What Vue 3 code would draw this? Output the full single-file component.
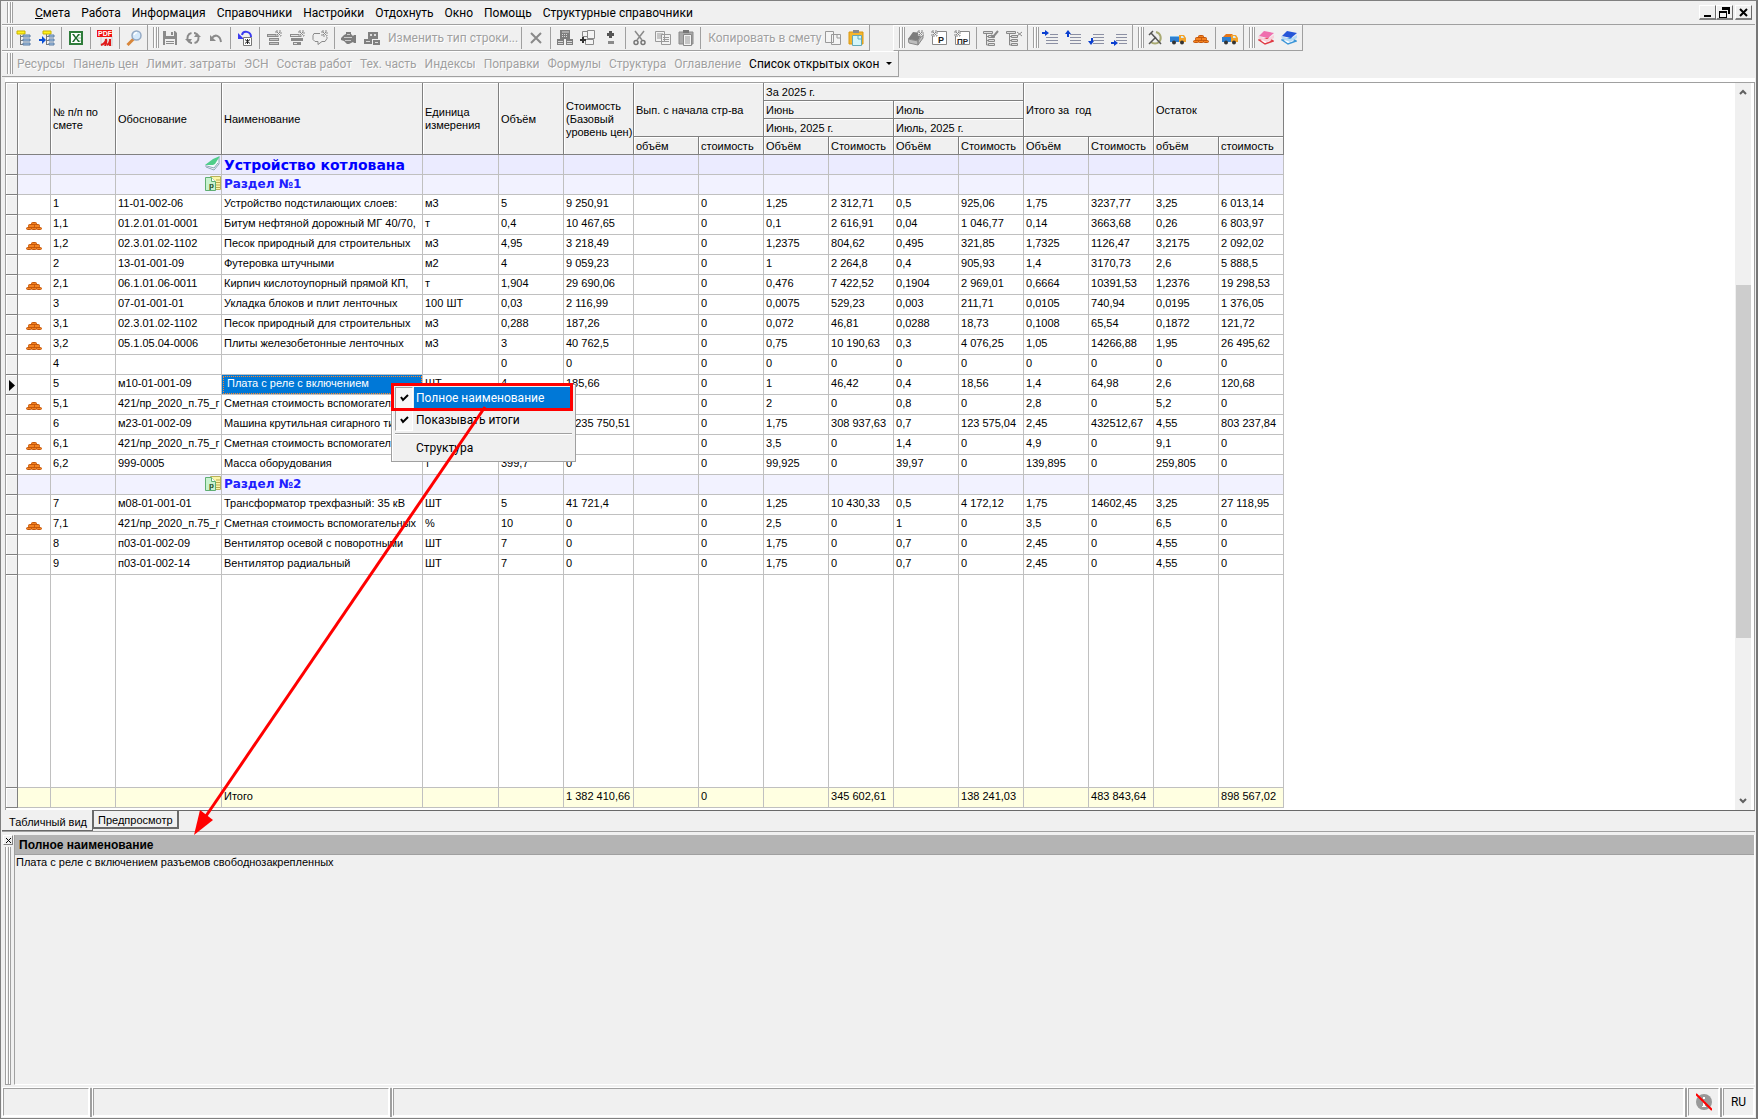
<template>
  <div class="window">
    <svg class="sprite" aria-hidden="true">
      <symbol id="i-tree" viewBox="0 0 16 16">
        <path d="M4.500 5v10M4.500 6.500h3M4.500 10.500h3M4.500 14.500h3" stroke="#777" fill="none" />
        <path d="M1 1h8v3H1z" fill="#fff21a" stroke="#c9b200" />
        <path d="M7 5h7v2H7zM7 9h7v2H7zM7 13h7v2H7z" fill="#a9c8ea" stroke="#5b7ca3" />
      </symbol>
      <symbol id="i-tree-in" viewBox="0 0 16 16">
        <path d="M7.500 4v11M8 6.500h2M8 10.500h2M8 14.500h2" stroke="#777" fill="none" />
        <path d="M4 1h8v3H4z" fill="#fff21a" stroke="#c9b200" />
        <path d="M10 5h5v2h-5zM10 9h5v2h-5zM10 13h5v2h-5z" fill="#a9c8ea" stroke="#5b7ca3" />
        <path d="M0 9h3V6l4 4-4 4v-3H0z" fill="#0a4fd6" />
      </symbol>
      <symbol id="i-excel" viewBox="0 0 16 16">
        <path d="M2 2h12v12H2z" fill="#fff" stroke="#2f7d3b" stroke-width="2" />
        <path d="M10 5h3M10 8h3M10 11h3" stroke="#8fc49a" />
        <path d="M4 4h2l2 3 2-3h2L9 8l3 4h-2L8 9l-2 3H4l3-4z" fill="#1d6b2b" />
      </symbol>
      <symbol id="i-pdf" viewBox="0 0 16 16">
        <path d="M4 6h11v10H4z" fill="#ececec" stroke="#ccc" />
        <path d="M0 0h15v7H0z" fill="#f01010" />
        <text x="1" y="6" font-size="7" font-weight="bold" fill="#fff" font-family="Liberation Sans">PDF</text>
        <path d="M4 15c3-1 5-3 5-6 1 3 0 5-1 7M10 15c2-1 3-3 3-6v7" stroke="#e01818" stroke-width="2" fill="none" />
      </symbol>
      <symbol id="i-lens" viewBox="0 0 16 16">
        <path d="M1.500 15l6-6" stroke="#d8863a" stroke-width="3" />
        <circle cx="10.500" cy="5.500" r="4.500" fill="#d5e9fb" stroke="#93a9c4" stroke-width="1.500" />
        <path d="M8 5q1-2.500 3-2.500" stroke="#fff" stroke-width="1.500" fill="none" />
      </symbol>
      <symbol id="i-save" viewBox="0 0 16 16">
        <path d="M1 1h12l2 2v12H1z" fill="#8a8a8a" />
        <path d="M4 1h8v5H4zM3 9h10v6H3z" fill="#efefef" />
        <path d="M9 2h2v3H9zM4 11h8v1H4zM4 13h8v1H4z" fill="#8a8a8a" />
      </symbol>
      <symbol id="i-refresh" viewBox="0 0 16 16">
        <path d="M3.500 11a5 5 0 0 1 3-8M12.500 5a5 5 0 0 1-3 8M9 3c2 0 3 1 3.500 3M7 13c-2 0-3-1-3.500-3" fill="none" stroke="#8a8a8a" stroke-width="2" />
        <path d="M0 9h7l-3 4zM9 7h7l-4-4z" fill="#8a8a8a" />
      </symbol>
      <symbol id="i-undo" viewBox="0 0 16 16">
        <path d="M4 8c3-4 8-3 9 4" fill="none" stroke="#8a8a8a" stroke-width="2" />
        <path d="M2 5v6h6z" fill="#8a8a8a" />
      </symbol>
      <symbol id="i-undo-page" viewBox="0 0 16 16">
        <path d="M5 5c1-5 9-4 9 2" fill="none" stroke="#3b3bf0" stroke-width="2" />
        <path d="M1 3v6h6z" fill="#3b3bf0" />
        <path d="M6.500 7.500h8v8h-8z" fill="#fff" stroke="#777" />
        <path d="M8 9.500l5 4M13 9.500l-5 4M10.500 9v5" stroke="#222" />
      </symbol>
      <symbol id="i-rows-new" viewBox="0 0 16 16">
        <path d="M1 4h11v3H1zM3 8h10v3H3zM3 12h10v3H3z" fill="#8a8a8a" />
        <path d="M2 5.500h8M4 9.500h8M4 13.500h8" stroke="#c4c4c4" />
        <use href="#i-star" />
      </symbol>
      <symbol id="i-rows-add" viewBox="0 0 16 16">
        <path d="M1 4h11v3H1zM2 8h12v3H2zM4 12h8v3H4z" fill="#8a8a8a" />
        <path d="M2 5.500h8M5 13.500h3" stroke="#e4e4e4" />
        <use href="#i-star" />
      </symbol>
      <symbol id="i-comment" viewBox="0 0 16 16">
        <path d="M8 3.500H2l-1 2v4l2 2h3v3l4-3h3l2-3V7" fill="none" stroke="#8a8a8a" />
        <use href="#i-star" />
      </symbol>
      <symbol id="i-star" viewBox="0 0 16 16">
        <path d="M10 1h5v5h-5z" fill="#eee" stroke="#8a8a8a" stroke-dasharray="2 1" />
        <path d="M11 2l3 3M14 2l-3 3" stroke="#8a8a8a" />
      </symbol>
      <symbol id="i-mixer" viewBox="0 0 16 16">
        <path d="M0 8l3-3 2-1V2h5v2l2 2 1-1h2v8h-2l-1-1-4 2H6l-3-3-3-1z" fill="#7d7d7d" />
        <path d="M3 7.500h8M4 10.500h6M6 4.500h3" stroke="#ccc" />
      </symbol>
      <symbol id="i-blocks" viewBox="0 0 16 16">
        <path d="M4 2h10v7H4zM0 9h8v5H0zM9 10h7v5H9z" fill="#808080" />
        <path d="M6 4h2v2H6zM10 4h2v2h-2zM2 11h4v1H2zM11 12h3v1h-3z" fill="#ddd" />
      </symbol>
      <symbol id="i-cross" viewBox="0 0 16 16">
        <path d="M3 3l10 10M13 3L3 13" stroke="#8a8a8a" stroke-width="2" />
      </symbol>
      <symbol id="i-calc" viewBox="0 0 16 16">
        <path d="M3 0h10v9H3zM0 9h7v6H0zM9 9h7v6H9z" fill="#7d7d7d" />
        <path d="M5 2h7M5 4.500h1M7 4.500h1M9 4.500h1M5 6.500h1M7 6.500h1M9 6.500h1M1 11.500h5M10 11.500h5M1 13.500h5M10 13.500h5" stroke="#d8d8d8" />
      </symbol>
      <symbol id="i-pages-plus" viewBox="0 0 16 16">
        <path d="M2.500 1.500h5v5h-5zM7.500.5h7v8h-7zM5.500 9.500h8v5h-8z" fill="#f4f4f4" stroke="#8a8a8a" />
        <path d="M0 10h6M3 7v6" stroke="#333" stroke-width="2" />
      </symbol>
      <symbol id="i-plus-minus" viewBox="0 0 16 16">
        <path d="M6 1h3v2h2v3H9v2H6V6H4V3h2z" fill="#555" />
        <path d="M5 11h6v3H5z" fill="#8a8a8a" />
      </symbol>
      <symbol id="i-cut" viewBox="0 0 16 16">
        <path d="M3 1l7 9M12 1L5 10" stroke="#8a8a8a" stroke-width="1.500" />
        <circle cx="4" cy="12.500" r="2" fill="none" stroke="#777" stroke-width="1.500" />
        <circle cx="11" cy="12.500" r="2" fill="none" stroke="#777" stroke-width="1.500" />
      </symbol>
      <symbol id="i-copy" viewBox="0 0 16 16">
        <path d="M.5 1.500h9v10h-9zM6.500 4.500h9v10h-9z" fill="#f2f2f2" stroke="#999" />
        <path d="M2 4h6M2 6h4M2 8h4M8 7.500h6M8 9.500h6M8 11.500h6" stroke="#999" />
      </symbol>
      <symbol id="i-paste" viewBox="0 0 16 16">
        <path d="M1 2h14v12H1z" fill="#aaa" stroke="#8a8a8a" />
        <path d="M5 0h6v3H5z" fill="#777" />
        <path d="M5.500 4.500h8v11h-8z" fill="#f2f2f2" stroke="#888" />
        <path d="M7 7h5M7 9h5M7 11h5M7 13h5" stroke="#999" />
      </symbol>
      <symbol id="i-copy-to" viewBox="0 0 16 16">
        <path d="M.5 1.500h8v11h-8zM6.500 4.500h9v10h-9z" fill="#f4f4f4" stroke="#999" />
        <path d="M12 4v4h4" fill="none" stroke="#999" />
      </symbol>
      <symbol id="i-paste-to" viewBox="0 0 16 16">
        <path d="M1 2h14v12H1z" fill="#f5b52c" stroke="#d99813" />
        <path d="M5 0h6v3H5z" fill="#8a8a8a" />
        <path d="M4.500 5.500h9v10h-9z" fill="#d3f6fb" stroke="#63a9b8" />
        <path d="M10 5v4h4" fill="none" stroke="#63a9b8" />
      </symbol>
      <symbol id="i-book-new" viewBox="0 0 16 16">
        <path d="M0 9l5-7 9 1-4 8z" fill="#7d7d7d" />
        <path d="M0 9l10 2v4L1 13zM10 11l5-7v4l-5 7z" fill="#bdbdbd" stroke="#888" />
        <use href="#i-star" />
      </symbol>
      <symbol id="i-page-r" viewBox="0 0 16 16">
        <path d="M1.500 1.500h14v13h-14z" fill="#fff" stroke="#888" />
        <path d="M1 1h5v5H1z" fill="#eee" stroke="#888" stroke-dasharray="2 1" />
        <path d="M2 2l3 3M5 2L2 5" stroke="#888" />
        <text x="7" y="13" font-size="9" font-weight="bold" fill="#222" font-family="Liberation Sans">Р</text>
      </symbol>
      <symbol id="i-page-pr" viewBox="0 0 16 16">
        <path d="M1.500 1.500h14v13h-14z" fill="#fff" stroke="#888" />
        <path d="M1 1h5v5H1z" fill="#eee" stroke="#888" stroke-dasharray="2 1" />
        <path d="M2 2l3 3M5 2L2 5" stroke="#888" />
        <text x="3" y="14" font-size="8" font-weight="bold" fill="#222" font-family="Liberation Sans">ПР</text>
      </symbol>
      <symbol id="i-tree-edit" viewBox="0 0 16 16">
        <path d="M.5 1.500h9v2h-9zM5.500 5.500h6v2h-6zM5.500 9.500h6v2h-6zM5.500 13.500h6v2h-6zM3.500 4v11H6M3.500 6.500H6M3.500 10.500H6" fill="#ddd" stroke="#888" />
        <path d="M8 5l2 2 5-6" fill="none" stroke="#888" stroke-width="2" />
      </symbol>
      <symbol id="i-tree-del" viewBox="0 0 16 16">
        <path d="M.5 1.500h9v2h-9zM5.500 5.500h6v2h-6zM5.500 9.500h6v2h-6zM5.500 13.500h6v2h-6zM3.500 4v11H6M3.500 6.500H6M3.500 10.500H6" fill="#ddd" stroke="#888" />
        <path d="M11 2l5 4M16 2l-5 4" stroke="#888" />
      </symbol>
      <symbol id="i-lines" viewBox="0 0 16 16">
        <path d="M5 4.500h11M5 7.500h11M5 10.500h11M5 13.500h11" stroke="#8b8fa3" />
      </symbol>
      <symbol id="i-ins-right" viewBox="0 0 16 16">
        <path d="M8 4.500h8M4 7.500h12M4 10.500h12M4 13.500h12" stroke="#8b8fa3" />
        <path d="M0 2h3V0l4 3-4 3V4H0z" fill="#0a3fd0" />
      </symbol>
      <symbol id="i-ins-up" viewBox="0 0 16 16">
        <use href="#i-lines" />
        <path d="M2 7V4H0l3-4 3 4H4v3z" fill="#0a3fd0" />
      </symbol>
      <symbol id="i-ins-down" viewBox="0 0 16 16">
        <use href="#i-lines" />
        <path d="M3 8h2v3h1l-3 4-3-4h3z" fill="#0a3fd0" />
      </symbol>
      <symbol id="i-ins-end" viewBox="0 0 16 16">
        <path d="M5 4.500h11M5 7.500h11M5 10.500h11M8 13.500h8" stroke="#8b8fa3" />
        <path d="M0 12h3v-2l4 3-4 3v-2H0z" fill="#0a3fd0" />
      </symbol>
      <symbol id="i-hammer" viewBox="0 0 16 16">
        <path d="M9 2c5 1 6 7 3 10-2 2-6 2-8 0" fill="none" stroke="#a9aa72" stroke-width="2" />
        <path d="M2 5l4-4M4 3l10 11M2 14l7-7" fill="none" stroke="#555" stroke-width="1.500" />
      </symbol>
      <symbol id="i-truck" viewBox="0 0 16 16">
        <path d="M0 6h9v6H0z" fill="#2f7fd0" />
        <path d="M0 6h9v1H0z" fill="#7fc0f0" />
        <path d="M9 5h5l2 3v4H9z" fill="#f3a32a" />
        <path d="M11 6h2l1 2h-3z" fill="#cfeaff" />
        <circle cx="4" cy="12.500" r="2" fill="#333" />
        <circle cx="12" cy="12.500" r="2" fill="#333" />
      </symbol>
      <symbol id="i-truck-full" viewBox="0 0 16 16">
        <path d="M1 7l3-3h6l3 3z" fill="#e5761a" />
        <path d="M0 7h9v5H0z" fill="#2f7fd0" />
        <path d="M9 5h5l2 3v4H9z" fill="#f3a32a" />
        <path d="M11 6h2l1 2h-3z" fill="#cfeaff" />
        <circle cx="4" cy="12.500" r="2" fill="#333" />
        <circle cx="12" cy="12.500" r="2" fill="#333" />
      </symbol>
      <symbol id="i-bricks" viewBox="0 0 16 16">
        <g fill="#f5821e" stroke="#c2560c">
          <rect x="5.500" y="5.500" width="5" height="2" rx="1" />
          <rect x="2.500" y="7.500" width="6" height="3" rx="1" />
          <rect x="8.500" y="7.500" width="5" height="3" rx="1" />
          <rect x=".5" y="10.500" width="5" height="2" rx="1" />
          <rect x="5.500" y="10.500" width="5" height="2" rx="1" />
          <rect x="10.500" y="10.500" width="5" height="2" rx="1" />
        </g>
      </symbol>
      <symbol id="i-books-red" viewBox="0 0 16 16">
        <path d="M1 10l6 4 8-3-5-3z" fill="#fff" stroke="#e03a44" stroke-width="1.500" />
        <path d="M0 6l9 3 7-4v3l-7 4-8-3z" fill="#f8d0da" />
        <path d="M1 6l5-5 10 2-6 5z" fill="#ef6fae" />
      </symbol>
      <symbol id="i-books-blue" viewBox="0 0 16 16">
        <path d="M1 10l6 4 8-3-5-3z" fill="#fff" stroke="#3c96d8" stroke-width="1.500" />
        <path d="M0 6l9 3 7-4v3l-7 4-8-3z" fill="#b7daf5" />
        <path d="M1 6l5-5 10 2-6 5z" fill="#2656d8" />
      </symbol>
      <symbol id="i-book-open" viewBox="0 0 16 16">
        <path d="M1 9L14 1v7l-5 6-8-3z" fill="#f4faff" stroke="#8ba4b4" />
        <path d="M0 9L8 3l7-3-5 8-2 1z" fill="#4fce8a" />
        <path d="M2 10l7 2 4-5" fill="none" stroke="#8ba4b4" />
      </symbol>
      <symbol id="i-section" viewBox="0 0 16 16">
        <path d="M5.500.5h10v13h-10z" fill="#fbf6a8" stroke="#b8b25c" />
        <path d="M11 4h4M11 6.500h4M11 9h4M11 11.500h4" stroke="#b8a850" />
        <path d="M.5 1.500h6l4 4v9H.5z" fill="#c9f2cf" stroke="#5fae72" />
        <path d="M6.500 1.500v4h4" fill="#fff" stroke="#5fae72" />
        <text x="4" y="12" font-size="8" font-weight="bold" fill="#1c4a1c" font-family="Liberation Sans">р</text>
      </symbol>
    </svg>

    <header class="menubar">
      <span class="grip"></span>
      <nav class="menu">
        <a v-for="(m, i) in menu" :key="m" href="#" :class="{ first: i === 0 }">{{ m }}</a>
      </nav>
      <div class="mdi">
        <button aria-label="Свернуть">
          <svg width="11" height="11"><path d="M2 8h7v2H2z" /></svg>
        </button>
        <button aria-label="Восстановить">
          <svg width="11" height="11"><path d="M3 0h8v7H9V3H3zM0 4h8v7H0zM1 6v4h6V6z" fill-rule="evenodd" /></svg>
        </button>
        <button aria-label="Закрыть">
          <svg width="11" height="11"><path d="M2 2l7 7M9 2L2 9" stroke="#000" stroke-width="2" /></svg>
        </button>
      </div>
    </header>

    <div class="toolbar-row">
      <div v-for="(bar, b) in toolbars" :key="b" class="toolbar" :class="{ apart: b === 2 }">
        <span class="grip"></span>
        <template v-for="(item, i) in bar" :key="i">
          <span v-if="item === '|'" class="sep"></span>
          <button v-else-if="item.startsWith('=')" class="tool-text" disabled>{{ item.slice(1) }}</button>
          <button v-else class="tool" :aria-label="item">
            <svg width="16" height="16"><use :href="'#i-' + item" /></svg>
          </button>
        </template>
      </div>
    </div>

    <div class="toolbar-row">
      <div class="toolbar panels">
        <span class="grip"></span>
        <button v-for="p in panels" :key="p" class="panel-btn" disabled>{{ p }}</button>
        <button class="panel-btn">Список открытых окон <i class="caret"></i></button>
      </div>
    </div>

    <main class="grid-frame">
      <div class="grid-area">
        <table class="grid">
          <colgroup>
            <col v-for="(w, i) in widths" :key="i" :style="{ width: w + 'px' }">
          </colgroup>
          <thead>
            <tr>
              <th rowspan="4"></th>
              <th rowspan="4"></th>
              <th rowspan="4">№ п/п по смете</th>
              <th rowspan="4">Обоснование</th>
              <th rowspan="4">Наименование</th>
              <th rowspan="4">Единица измерения</th>
              <th rowspan="4">Объём</th>
              <th rowspan="4">Стоимость (Базовый уровень&nbsp;цен)</th>
              <th colspan="2" rowspan="3">Вып. с начала стр-ва</th>
              <th colspan="4">За 2025 г.</th>
              <th colspan="2" rowspan="3">Итого за&nbsp; год</th>
              <th colspan="2" rowspan="3">Остаток</th>
            </tr>
            <tr>
              <th colspan="2">Июнь</th>
              <th colspan="2">Июль</th>
            </tr>
            <tr>
              <th colspan="2">Июнь, 2025 г.</th>
              <th colspan="2">Июль, 2025 г.</th>
            </tr>
            <tr>
              <th v-for="(h, i) in subHeads" :key="i">{{ h }}</th>
            </tr>
          </thead>
          <tbody>
            <tr v-for="(row, r) in rows" :key="r" :class="row.kind">
              <td class="mark">
                <svg v-if="row.current" width="6" height="11"><path d="M0 0l6 5.500L0 11z" /></svg>
              </td>
              <td class="type">
                <svg v-if="row.res" width="16" height="16"><use href="#i-bricks" /></svg>
              </td>
              <template v-if="row.kind">
                <td></td>
                <td class="kind-icon">
                  <svg width="16" height="16"><use :href="row.kind === 'title' ? '#i-book-open' : '#i-section'" /></svg>
                </td>
                <td class="caption">{{ row.name }}</td>
                <td v-for="n in 13" :key="n"></td>
              </template>
              <template v-else>
                <td v-for="(c, i) in row.cells" :key="i" :class="{ selected: row.current && i === 2 }">{{ c }}</td>
              </template>
            </tr>
            <tr class="filler">
              <td class="mark"></td>
              <td v-for="n in 17" :key="n"></td>
            </tr>
          </tbody>
          <tfoot>
            <tr>
              <td class="mark"></td>
              <td v-for="(t, i) in totals" :key="i">{{ t }}</td>
            </tr>
          </tfoot>
        </table>
      </div>
      <div class="scrollbar">
        <svg width="8" height="6"><path d="M1 5l3-3 3 3" /></svg>
        <div class="track"><div class="thumb"></div></div>
        <svg width="8" height="6"><path d="M1 1l3 3 3-3" /></svg>
      </div>
    </main>

    <div class="tabs" role="tablist">
      <button role="tab" class="tab active" aria-selected="true">Табличный вид</button>
      <button role="tab" class="tab" aria-selected="false">Предпросмотр</button>
      <span class="tabs-rest"></span>
    </div>

    <section class="details">
      <div class="details-side">
        <button class="close" aria-label="Закрыть панель">
          <svg width="7" height="7"><path d="M1 1l5 5M6 1L1 6" stroke="#000" /></svg>
        </button>
        <span class="grip tall"></span>
      </div>
      <div class="details-main">
        <h2>Полное наименование</h2>
        <p>Плата с реле с включением разъемов свободнозакрепленных</p>
      </div>
    </section>

    <footer class="status">
      <div class="cell small"></div>
      <div class="cell medium"></div>
      <div class="cell wide"></div>
      <div class="cell tiny">
        <svg width="16" height="18">
          <circle cx="8" cy="9" r="8" fill="#999" />
          <path d="M7 4h2v2H7zM6 8h3v5h1v1H6v-1h1V9H6z" fill="#fff" />
          <path d="M0 1l16 16" stroke="red" stroke-width="2" />
        </svg>
      </div>
      <div class="cell tiny">RU</div>
    </footer>

    <div class="popup" role="menu">
      <button role="menuitemcheckbox" aria-checked="true" class="popup-item hot">
        <span class="check"><svg width="9" height="8"><path d="M1 3l2 3 5-5" /></svg></span>
        <span class="label">Полное наименование</span>
      </button>
      <button role="menuitemcheckbox" aria-checked="true" class="popup-item">
        <span class="check"><svg width="9" height="8"><path d="M1 3l2 3 5-5" /></svg></span>
        <span class="label">Показывать итоги</span>
      </button>
      <hr>
      <button role="menuitem" class="popup-item last">
        <span class="label">Структура</span>
      </button>
    </div>

    <svg class="callout" width="600" height="840" aria-hidden="true">
      <rect x="392.500" y="384.500" width="179" height="25" />
      <path d="M485 407L206 816" />
      <path class="head" d="M194 835l6-25 13 10z" />
    </svg>
  </div>
</template>

<script setup>
const menu = [
  'Смета', 'Работа', 'Информация', 'Справочники', 'Настройки',
  'Отдохнуть', 'Окно', 'Помощь', 'Структурные справочники',
];

// '|' is a separator, a leading '=' is a text button, the rest are icon names
const toolbars = [
  ['tree', 'tree-in', '|', 'excel', '|', 'pdf', '|', 'lens'],
  [
    'save', 'refresh', 'undo', '|', 'undo-page', '|', 'rows-new', 'rows-add', 'comment', '|',
    'mixer', 'blocks', '=Изменить тип строки...', '|', 'cross', '|', 'calc', 'pages-plus', 'plus-minus', '|',
    'cut', 'copy', 'paste', '|', '=Копировать в смету', 'copy-to', 'paste-to',
  ],
  ['book-new', 'page-r', 'page-pr', '|', 'tree-edit', 'tree-del'],
  ['ins-right', 'ins-up', 'ins-down', 'ins-end'],
  ['hammer', 'truck', 'bricks', '|', 'truck-full'],
  ['books-red', 'books-blue'],
];

const panels = [
  'Ресурсы', 'Панель цен', 'Лимит. затраты', 'ЭСН', 'Состав работ', 'Тех. часть',
  'Индексы', 'Поправки', 'Формулы', 'Структура', 'Оглавление',
];

const widths = [12, 33, 65, 106, 201, 76, 65, 70, 65, 65, 65, 65, 65, 65, 65, 65, 65, 65];

const subHeads = [
  'объём', 'стоимость', 'Объём', 'Стоимость', 'Объём',
  'Стоимость', 'Объём', 'Стоимость', 'объём', 'стоимость',
];

const line = (text, extra = {}) => {
  const c = text.split('|');
  // nothing was done before this year, so that pair is the same on every line
  return { cells: [...c.slice(0, 6), '', '0', ...c.slice(6)], ...extra };
};
const res = (text) => line(text, { res: true });

const rows = [
  { kind: 'title', name: 'Устройство котлована' },
  { kind: 'section', name: 'Раздел №1' },
  line('1|11-01-002-06|Устройство подстилающих слоев:|м3|5|9 250,91|1,25|2 312,71|0,5|925,06|1,75|3237,77|3,25|6 013,14'),
  res('1,1|01.2.01.01-0001|Битум нефтяной дорожный МГ 40/70,|т|0,4|10 467,65|0,1|2 616,91|0,04|1 046,77|0,14|3663,68|0,26|6 803,97'),
  res('1,2|02.3.01.02-1102|Песок природный для строительных|м3|4,95|3 218,49|1,2375|804,62|0,495|321,85|1,7325|1126,47|3,2175|2 092,02'),
  line('2|13-01-001-09|Футеровка штучными|м2|4|9 059,23|1|2 264,8|0,4|905,93|1,4|3170,73|2,6|5 888,5'),
  res('2,1|06.1.01.06-0011|Кирпич кислотоупорный прямой КП,|т|1,904|29 690,06|0,476|7 422,52|0,1904|2 969,01|0,6664|10391,53|1,2376|19 298,53'),
  line('3|07-01-001-01|Укладка блоков и плит ленточных|100 ШТ|0,03|2 116,99|0,0075|529,23|0,003|211,71|0,0105|740,94|0,0195|1 376,05'),
  res('3,1|02.3.01.02-1102|Песок природный для строительных|м3|0,288|187,26|0,072|46,81|0,0288|18,73|0,1008|65,54|0,1872|121,72'),
  res('3,2|05.1.05.04-0006|Плиты железобетонные ленточных|м3|3|40 762,5|0,75|10 190,63|0,3|4 076,25|1,05|14266,88|1,95|26 495,62'),
  line('4||||0|0|0|0|0|0|0|0|0|0'),
  line('5|м10-01-001-09|Плата с реле с включением|ШТ|4|185,66|1|46,42|0,4|18,56|1,4|64,98|2,6|120,68', { current: true }),
  res('5,1|421/пр_2020_п.75_г|Сметная стоимость вспомогательных|%|8|0|2|0|0,8|0|2,8|0|5,2|0'),
  line('6|м23-01-002-09|Машина крутильная сигарного типа|ШТ|7|1 235 750,51|1,75|308 937,63|0,7|123 575,04|2,45|432512,67|4,55|803 237,84'),
  res('6,1|421/пр_2020_п.75_г|Сметная стоимость вспомогательных|%|14|0|3,5|0|1,4|0|4,9|0|9,1|0'),
  res('6,2|999-0005|Масса оборудования|т|399,7|0|99,925|0|39,97|0|139,895|0|259,805|0'),
  { kind: 'section', name: 'Раздел №2' },
  line('7|м08-01-001-01|Трансформатор трехфазный: 35 кВ|ШТ|5|41 721,4|1,25|10 430,33|0,5|4 172,12|1,75|14602,45|3,25|27 118,95'),
  res('7,1|421/пр_2020_п.75_г|Сметная стоимость вспомогательных|%|10|0|2,5|0|1|0|3,5|0|6,5|0'),
  line('8|п03-01-002-09|Вентилятор осевой с поворотными|ШТ|7|0|1,75|0|0,7|0|2,45|0|4,55|0'),
  line('9|п03-01-002-14|Вентилятор радиальный|ШТ|7|0|1,75|0|0,7|0|2,45|0|4,55|0'),
];

const totals = [
  '', '', '', 'Итого', '', '', '1 382 410,66', '', '0', '', '345 602,61',
  '', '138 241,03', '', '483 843,64', '', '898 567,02',
];
</script>

<style>
body {
  margin: 0;
  background: #f0f0f0;
}
</style>

<style scoped>
.window {
  position: relative;
  box-sizing: border-box;
  min-height: 100vh;
  display: flex;
  flex-direction: column;
  padding: 0 1px 1px;
  border: 1px solid #808080;
  border-right: 2px solid #767676;
  background: #f0f0f0;
  font: 12px/16px Roboto, "Noto Sans", sans-serif;
  color: #000;
}

.sprite { display: none; }

button {
  margin: 0;
  padding: 0;
  border: 0;
  background: none;
  font: inherit;
  color: inherit;
}

button:disabled {
  color: #a0a0a0;
  text-shadow: 1px 1px #fff;
}

.grip {
  box-sizing: border-box;
  flex: none;
  width: 6px;
  height: 21px;
  margin-left: 5px;
  border: solid #a0a0a0;
  border-width: 0 1px;
  background: linear-gradient(90deg, #fff 1px, #f0f0f0 1px 2px, #a0a0a0 2px 3px, #fff 3px);
}

/* menu */
.menubar {
  display: flex;
  align-items: center;
  height: 23px;
  border-bottom: 1px solid #a0a0a0;
}
.menu {
  flex: 1;
  display: flex;
  gap: 11px;
  padding-left: 22px;
}
.menu a {
  color: #000;
  text-decoration: none;
  white-space: nowrap;
}
.menu .first::first-letter { text-decoration: underline; }

.mdi {
  display: flex;
  padding-right: 3px;
}
.mdi button {
  box-sizing: border-box;
  width: 17px;
  height: 15px;
  display: flex;
  align-items: center;
  justify-content: center;
  border: 1px solid #fff;
  border-right-color: #696969;
  border-bottom: 2px solid #808080;
}
.mdi button:last-child { margin-left: 2px; }

/* toolbars */
.toolbar-row {
  display: flex;
  height: 26px;
}
.toolbar {
  box-sizing: border-box;
  display: flex;
  align-items: center;
  padding-right: 1px;
  border: solid #a0a0a0;
  border-width: 0 1px 1px 0;
  box-shadow: inset 0 1px #fff;
}
.apart {
  margin-left: 23px;
  border-left: 1px solid #fff;
}
.sep {
  width: 1px;
  height: 22px;
  margin: 0 3px 0 2px;
  background: #a0a0a0;
}
.tool {
  box-sizing: border-box;
  width: 23px;
  height: 22px;
  display: flex;
  align-items: center;
  padding-left: 3px;
}
.tool-text {
  padding: 0 1px 0 4px;
  white-space: nowrap;
}
.panel-btn {
  padding: 0 4px;
  white-space: nowrap;
}
.panels { padding-right: 2px; }
.caret {
  display: inline-block;
  margin: 0 0 3px 4px;
  border: 3px solid transparent;
  border-top-color: #000;
  border-bottom: 0;
}

/* grid */
.grid-frame {
  display: flex;
  margin: 5px 0 0 3px;
  padding-right: 3px;
  border-top: 1px solid #a0a0a0;
  border-left: 1px solid #a0a0a0;
  border-right: 1px solid #a0a0a0;
  box-shadow: 0 -4px #fff;
  background: #fff;
}
.grid-area {
  flex: 1;
  min-width: 0;
  padding-bottom: 2px;
  overflow: hidden;
}
.grid {
  width: 1278px;
  table-layout: fixed;
  border-collapse: separate;
  border-spacing: 0;
  font: 11px/13px "Liberation Sans", Arial, sans-serif;
}
.grid th {
  box-sizing: border-box;
  height: 18px;
  padding: 1px 0 0 2px;
  border-right: 1px solid #808080;
  border-bottom: 1px solid #808080;
  background: #f0f0f0;
  box-shadow: inset 1px 1px #fff;
  font-weight: normal;
  text-align: left;
}
.grid td {
  box-sizing: border-box;
  height: 20px;
  padding: 0 0 2px 2px;
  border-right: 1px solid #c0c0c0;
  border-bottom: 1px solid #c0c0c0;
  overflow: hidden;
  white-space: nowrap;
}
.grid .mark {
  padding: 1px 0 0 3px;
  border-color: #808080;
  background: #f0f0f0;
  box-shadow: inset 1px 1px #fff;
}
.grid svg { display: block; }
.grid .type { padding: 0 0 0 8px; }
.title td { background: #ebebff; }
.section td { background: #f2f2ff; }
.grid .kind-icon { padding: 0 0 2px 89px; }
.grid .caption {
  padding-bottom: 0;
  font-family: "DejaVu Sans", sans-serif;
  font-size: 12px;
  font-weight: bold;
  color: #2020ff;
}
.title .caption {
  font-size: 14px;
  line-height: 16px;
  color: #0000ff;
}
.grid .selected {
  padding-left: 5px;
  background: #0078d7;
  color: #fff;
  outline: 1px dotted #ff8728;
  outline-offset: -2px;
}
.grid .filler td { height: 213px; }
tfoot td { background: #ffffe1; }

.scrollbar {
  width: 16px;
  display: flex;
  flex-direction: column;
  align-items: center;
  gap: 7px;
  padding: 6px 0;
  background: #f0f0f0;
}
.scrollbar path {
  fill: none;
  stroke: #606060;
  stroke-width: 2;
}
.track {
  flex: 1;
  width: 15px;
}
.thumb {
  height: 353px;
  margin-top: 183px;
  background: #cdcdcd;
}

/* tabs */
.tabs {
  display: flex;
  align-items: flex-start;
  height: 21px;
  border-bottom: 1px solid #a0a0a0;
  font: 11px/16px "Liberation Sans", Arial, sans-serif;
}
.tab {
  box-sizing: border-box;
  height: 19px;
  padding: 1px 4px 0;
  border: solid #696969;
  border-width: 1px 2px 2px 1px;
}
.tab.active {
  height: 21px;
  padding: 4px 5px 0 7px;
  border-width: 0 1px 1px 0;
}
.tabs-rest {
  flex: 1;
  border-top: 1px solid #696969;
}

/* details */
.details {
  flex: 1;
  display: flex;
  margin-top: 3px;
}
.details-side {
  display: flex;
  flex-direction: column;
  align-items: center;
  width: 12px;
}
.close {
  box-sizing: border-box;
  width: 10px;
  height: 10px;
  display: flex;
  align-items: center;
  justify-content: center;
  border: 1px solid #fff;
  border-right-color: #808080;
  border-bottom-color: #808080;
}
.tall {
  flex: 1;
  height: auto;
  margin: 2px 0 0;
  border-bottom: 1px solid #a0a0a0;
}
.details-main {
  flex: 1;
  border-right: 1px solid #fff;
  border-bottom: 1px solid #fff;
  border-left: 1px solid #a0a0a0;
  font: 11px/14px "Liberation Sans", Arial, sans-serif;
}
.details-main h2 {
  margin: 0;
  padding: 2px 4px 1px;
  border-bottom: 1px solid #a0a0a0;
  background: #b4b4b4;
  font-size: 12px;
  line-height: 16px;
}
.details-main p { margin: 0 1px; }

/* status bar */
.status {
  display: flex;
  gap: 2px;
  margin-top: 2px;
  padding: 1px 1px 0;
  border-bottom: 1px solid #a0a0a0;
  background: #f0f0f0;
}
.cell {
  box-sizing: border-box;
  height: 28px;
  display: flex;
  align-items: center;
  justify-content: center;
  border: 1px solid #fff;
  border-top-color: #a0a0a0;
  border-left-color: #a0a0a0;
  outline: 1px solid #fff;
}
.cell + .cell {
  margin-left: 2px;
  box-shadow: -3px 0 #a0a0a0;
}
.small { width: 86px; }
.medium { width: 296px; }
.wide { flex: 1; }
.tiny { width: 31px; }

/* popup menu */
.popup {
  position: absolute;
  top: 383px;
  left: 390px;
  box-sizing: border-box;
  width: 185px;
  padding: 2px 3px;
  border: 1px solid #a0a0a0;
  background: #f0f0f0;
  box-shadow: inset 1px 1px #fff;
}
.popup-item {
  width: 100%;
  height: 22px;
  display: flex;
  text-align: left;
}
.check {
  box-sizing: border-box;
  width: 18px;
  display: flex;
  align-items: center;
  justify-content: center;
  border: 1px solid #fff;
  border-top-color: #a0a0a0;
  border-left-color: #a0a0a0;
  background: #f7f7f7;
}
.check path {
  fill: none;
  stroke: #000;
  stroke-width: 2;
}
.label {
  flex: 1;
  margin-left: 1px;
  padding-left: 2px;
  line-height: 22px;
  white-space: nowrap;
}
.hot .label {
  background: #0078d7;
  color: #fff;
}
.last .label { margin-left: 19px; }
.popup hr {
  margin: 2px 0;
  border: 0;
  border-top: 1px solid #a0a0a0;
  border-bottom: 1px solid #fff;
}

.callout {
  position: absolute;
  top: -1px;
  left: -1px;
  pointer-events: none;
}
.callout rect,
.callout path {
  fill: none;
  stroke: red;
  stroke-width: 3;
}
.callout .head {
  fill: red;
  stroke: none;
}
</style>
